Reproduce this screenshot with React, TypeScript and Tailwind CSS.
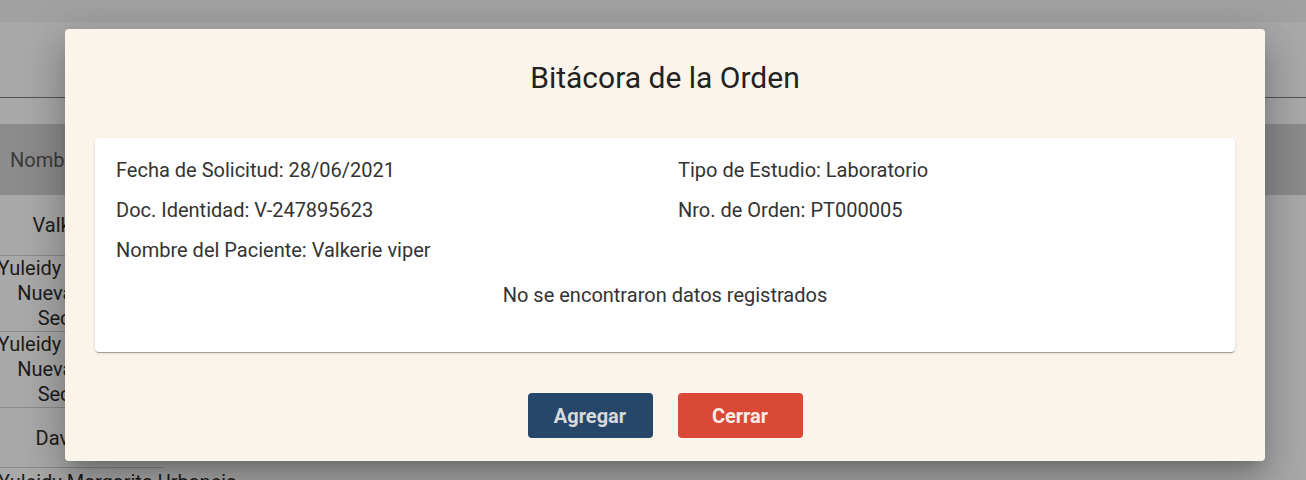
const font = { fontFamily: "Roboto, 'Liberation Sans', sans-serif" };

function BackgroundPage() {
  return (
    <div className="h-[480px] w-full overflow-hidden bg-[#a9a9a9] text-[20px] text-[#1c1c1c]" style={font}>
      <div className="h-[22px] bg-[#a1a1a1]" />
      <div className="h-[76px] border-b border-[#555]" />
      <div className="h-[26px]" />
      <div className="flex h-[71px] items-center bg-[#8c8c8c] pl-[10px] text-[#3a3a3a]">Nombre del Paciente</div>
      <div className="w-[164px]">
        <div className="flex h-[61px] items-center justify-center border-b border-[#8a8a8a] pl-[20px]">Valkerie viper</div>
        <div className="flex h-[76px] flex-col items-center justify-center border-b border-[#8a8a8a] leading-[25px]">
          <span className="-ml-[14px] whitespace-nowrap">Yuleidy Margarita</span>
          <span>Nueva Esparta</span>
          <span>Sección A</span>
        </div>
        <div className="flex h-[76px] flex-col items-center justify-center border-b border-[#8a8a8a] leading-[25px]">
          <span className="-ml-[14px] whitespace-nowrap">Yuleidy Margarita</span>
          <span>Nueva Esparta</span>
          <span>Sección A</span>
        </div>
        <div className="flex h-[60px] items-center justify-center border-b border-[#8a8a8a] pl-[12px]">David Pérez</div>
      </div>
      <div className="-ml-[2px] whitespace-nowrap pt-[2px] leading-[24px]">Yuleidy Margarita Urbaneja</div>
    </div>
  );
}

export default function App() {
  return (
    <div className="relative h-[480px] w-full overflow-hidden">
      <BackgroundPage />
      <div
        className="absolute left-[65px] top-[29px] flex w-[1200px] flex-col items-center rounded-[4px] bg-[#fbf4ea] px-[30px] pb-[23px] pt-[30px] shadow-[0_11px_15px_-7px_rgba(0,0,0,0.2),0_24px_38px_3px_rgba(0,0,0,0.14),0_9px_46px_8px_rgba(0,0,0,0.12)]"
        style={font}
      >
        <h2 className="text-[30px] leading-[38px] text-[#222]">Bitácora de la Orden</h2>

        <div className="mt-[41px] w-full rounded-[4px] bg-white px-[21px] pb-[45px] pt-[20px] text-[20px] leading-[24px] text-[#333] shadow-[0_2px_1px_-1px_rgba(0,0,0,0.2),0_1px_1px_0_rgba(0,0,0,0.14),0_1px_3px_0_rgba(0,0,0,0.12)]">
          <div className="grid grid-cols-[562px_1fr] gap-y-[16px]">
            <div>Fecha de Solicitud: 28/06/2021</div>
            <div>Tipo de Estudio: Laboratorio</div>
            <div>Doc. Identidad: V-247895623</div>
            <div>Nro. de Orden: PT000005</div>
            <div>Nombre del Paciente: Valkerie viper</div>
            <div />
          </div>
          <p className="mt-[21px] text-center">No se encontraron datos registrados</p>
        </div>

        <div className="mt-[41px] flex gap-[25px]">
          <button className="h-[45px] w-[125px] rounded-[4px] bg-[#26476a] text-[20px] font-bold text-[#d9d9d9]">
            Agregar
          </button>
          <button className="h-[45px] w-[125px] rounded-[4px] bg-[#da4935] text-[20px] font-bold text-[#f7ece4]">
            Cerrar
          </button>
        </div>
      </div>
    </div>
  );
}
